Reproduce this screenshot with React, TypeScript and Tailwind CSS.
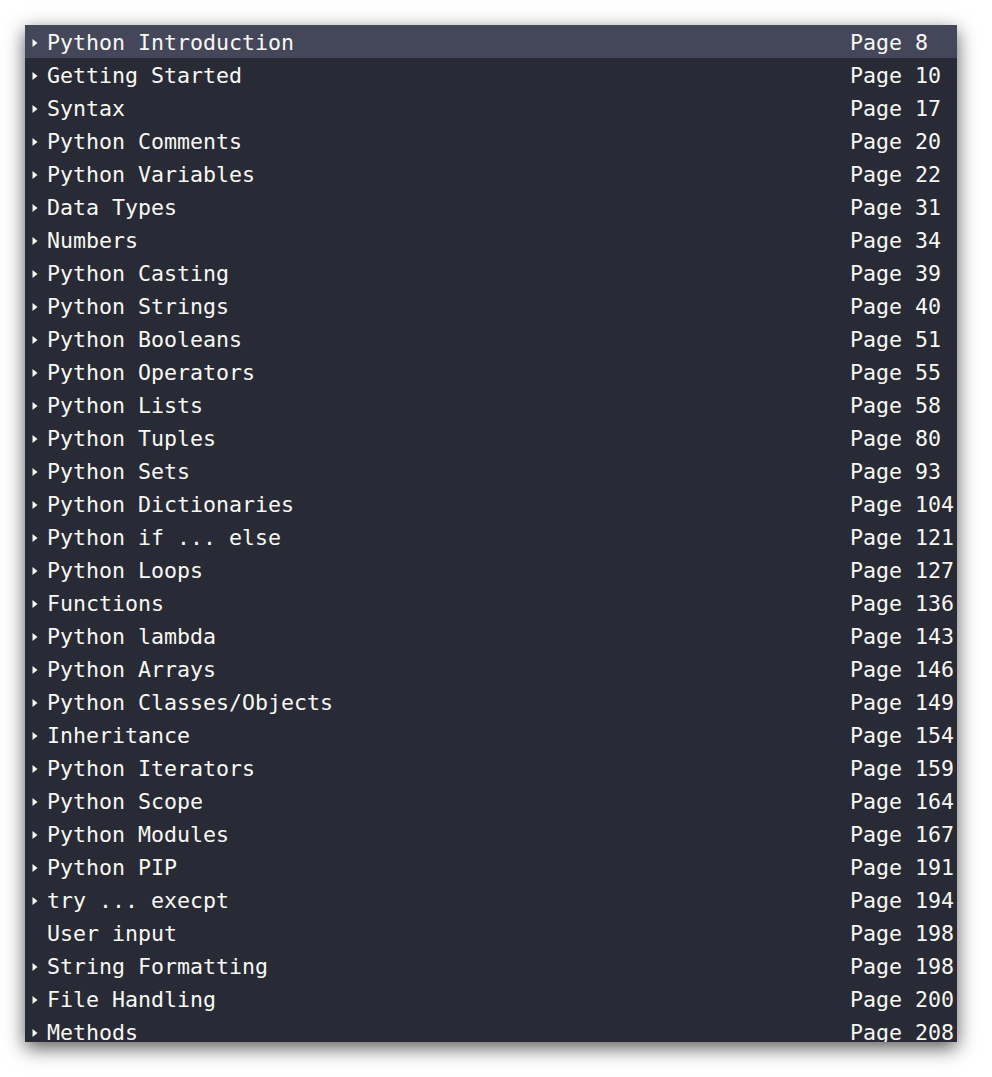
const chapters: [string, number, boolean][] = [
  ["Python Introduction", 8, true],
  ["Getting Started", 10, true],
  ["Syntax", 17, true],
  ["Python Comments", 20, true],
  ["Python Variables", 22, true],
  ["Data Types", 31, true],
  ["Numbers", 34, true],
  ["Python Casting", 39, true],
  ["Python Strings", 40, true],
  ["Python Booleans", 51, true],
  ["Python Operators", 55, true],
  ["Python Lists", 58, true],
  ["Python Tuples", 80, true],
  ["Python Sets", 93, true],
  ["Python Dictionaries", 104, true],
  ["Python if ... else", 121, true],
  ["Python Loops", 127, true],
  ["Functions", 136, true],
  ["Python lambda", 143, true],
  ["Python Arrays", 146, true],
  ["Python Classes/Objects", 149, true],
  ["Inheritance", 154, true],
  ["Python Iterators", 159, true],
  ["Python Scope", 164, true],
  ["Python Modules", 167, true],
  ["Python PIP", 191, true],
  ["try ... execpt", 194, true],
  ["User input", 198, false],
  ["String Formatting", 198, true],
  ["File Handling", 200, true],
  ["Methods", 208, true],
];

const Arrow = () => (
  <svg width="6" height="10" viewBox="0 0 6 10" className="shrink-0">
    <path d="M0.5 1 L5.5 5 L0.5 9 Z" fill="#f8f8f2" />
  </svg>
);

export default function App() {
  return (
    <div className="min-h-[1077px] bg-white pt-[25px] pl-[25px]">
      {/* the last row is cut off by the panel, as in the screenshot */}
      <div className="w-[932px] h-[1017px] overflow-hidden bg-[#282a36] shadow-[0_6px_18px_rgba(0,0,0,0.65)] font-['DejaVu_Sans_Mono',monospace] text-[21.6px] text-[#f8f8f2]">
        {chapters.map(([title, page, hasKids], i) => (
          <div
            key={title + i}
            className={`flex items-center h-[33px] pt-[2px] whitespace-pre ${i === 0 ? "bg-[#44475a]" : ""}`}
          >
            <div className="w-[22px] flex justify-end pr-[9px]">{hasKids ? <Arrow /> : null}</div>
            <span className="flex-1 leading-[31px]">{title}</span>
            <span className="w-[107px] leading-[31px]">Page {page}</span>
          </div>
        ))}
      </div>
    </div>
  );
}
